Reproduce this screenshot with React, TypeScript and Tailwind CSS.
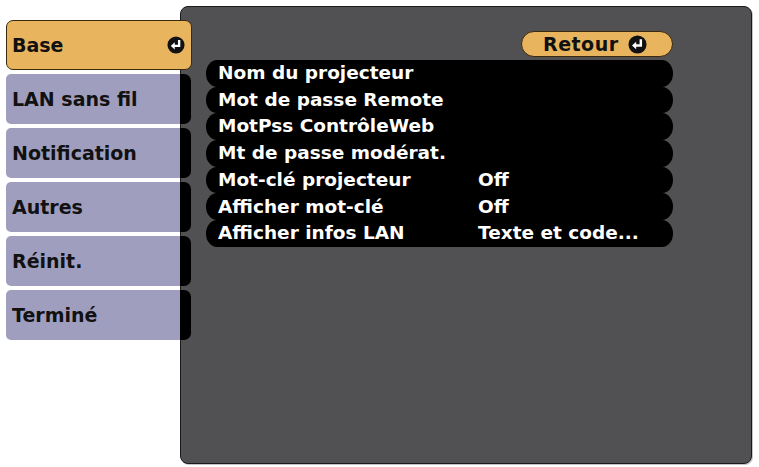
import React from 'react'

const tabs = ['Base', 'LAN sans fil', 'Notification', 'Autres', 'Réinit.', 'Terminé']

const rows: [string, string][] = [
  ['Nom du projecteur', ''],
  ['Mot de passe Remote', ''],
  ['MotPss ContrôleWeb', ''],
  ['Mt de passe modérat.', ''],
  ['Mot-clé projecteur', 'Off'],
  ['Afficher mot-clé', 'Off'],
  ['Afficher infos LAN', 'Texte et code...'],
]

// black disc with the white "enter" arrow
function EnterIcon({ size = 18 }: { size?: number }) {
  return (
    <svg width={size} height={size} viewBox="0 0 20 20">
      <circle cx="10" cy="10" r="9.5" fill="#111" />
      <path d="M13.5 4.5 V11 H8" stroke="#fff" strokeWidth="2.6" fill="none" strokeLinejoin="miter" />
      <path d="M4.2 11 L8.6 7 L8.6 15 Z" fill="#fff" />
    </svg>
  )
}

export default function App() {
  return (
    <div className="w-[759px] h-[467px] bg-white flex pl-[6px] font-['DejaVu_Sans',sans-serif] font-bold overflow-hidden">
      {/* Tabs */}
      <div className="relative z-10 w-[186px] shrink-0 pt-[20px] flex flex-col gap-[4px]">
        {tabs.map((t, i) =>
          i === 0 ? (
            <div
              key={t}
              className="h-[50px] w-[186px] rounded-[7px] bg-[#e8b55e] border border-[#3b2a0c] flex items-center justify-between pl-[5px] pr-[6px] text-[19px] text-[#111]"
            >
              <span>{t}</span>
              <EnterIcon />
            </div>
          ) : (
            <div key={t} className="h-[50px] flex">
              <div className="w-[174px] rounded-l-[5px] bg-[#a09ebf] flex items-center pl-[6px] text-[19px] text-[#111]">
                {t}
              </div>
              <div className="w-[11px] bg-black rounded-r-[7px]" />
            </div>
          )
        )}
      </div>

      {/* Main panel */}
      <div className="-ml-[12px] mt-[6px] w-[572px] h-[458px] shrink-0 rounded-[8px] bg-[#515153] border border-[#1a1a1a] shadow-[1px_1px_0_#c4c4c4] pl-[25px] pt-[24px]">
        <div className="w-[467px] flex justify-end">
          <div className="h-[26px] w-[152px] rounded-full bg-[#e8b55e] border border-[#3b2a0c] flex items-center pl-[21px] gap-[9px] text-[19px] text-[#111] tracking-[0.5px]">
            <span>Retour</span>
            <EnterIcon size={19} />
          </div>
        </div>
        <div className="mt-[3px] w-[467px] flex flex-col">
          {rows.map(([label, value]) => (
            <div
              key={label}
              className="h-[26.7px] bg-black rounded-[11px/13.35px] flex items-center pl-[12px] text-[18.5px] text-white leading-none"
            >
              <span className="w-[260px] shrink-0">{label}</span>
              <span>{value}</span>
            </div>
          ))}
        </div>
      </div>
    </div>
  )
}
